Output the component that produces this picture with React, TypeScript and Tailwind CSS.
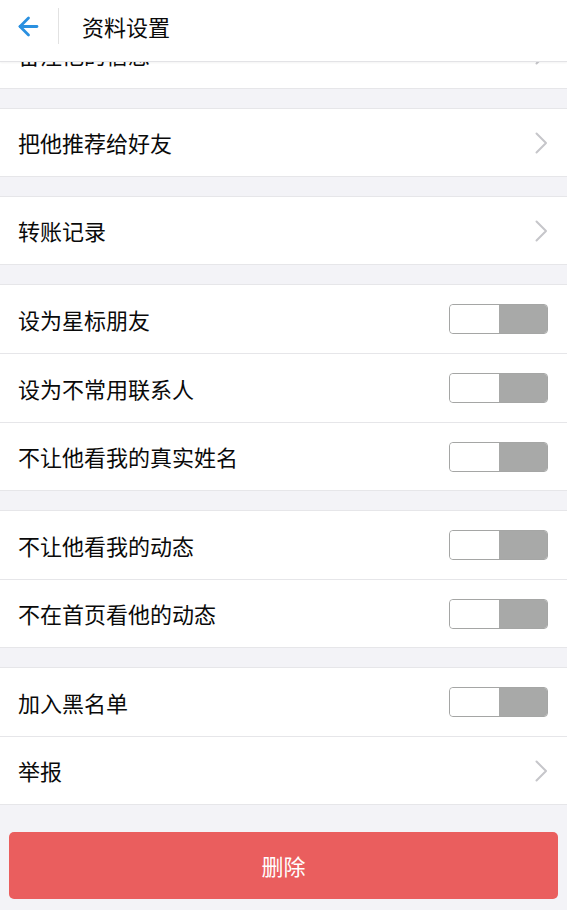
import { ArrowLeft } from 'lucide-react';

type Item = { label: string; kind: 'link' | 'toggle' };

const groups: Item[][] = [
  [{ label: '把他推荐给好友', kind: 'link' }],
  [{ label: '转账记录', kind: 'link' }],
  [
    { label: '设为星标朋友', kind: 'toggle' },
    { label: '设为不常用联系人', kind: 'toggle' },
    { label: '不让他看我的真实姓名', kind: 'toggle' },
  ],
  [
    { label: '不让他看我的动态', kind: 'toggle' },
    { label: '不在首页看他的动态', kind: 'toggle' },
  ],
  [
    { label: '加入黑名单', kind: 'toggle' },
    { label: '举报', kind: 'link' },
  ],
];

function Chevron() {
  return (
    <svg width="13" height="22" viewBox="0 0 13 22" fill="none">
      <polyline points="1.5,1.5 11,11 1.5,20.5" stroke="#c6c6ca" strokeWidth="2" strokeLinecap="round" strokeLinejoin="round" />
    </svg>
  );
}

function Toggle() {
  return (
    <div className="flex h-[30px] w-[99px] overflow-hidden rounded-[4px] border border-[#a5a6a5]">
      <div className="w-1/2 rounded-[3px] bg-white" />
      <div className="w-1/2 bg-[#a8a9a8]" />
    </div>
  );
}

function Row({ item, last }: { item: Item; last: boolean }) {
  return (
    <div
      className={`flex h-[69px] items-center justify-between border-t border-[#e6e6e9] bg-white pl-[18px] pr-[19px] ${
        last ? 'border-b' : ''
      }`}
    >
      <span className="text-[22px] text-[#0a0a0a]">{item.label}</span>
      {item.kind === 'toggle' ? <Toggle /> : <Chevron />}
    </div>
  );
}

export default function App() {
  return (
    <div
      className="relative h-[910px] w-[567px] overflow-hidden bg-[#f3f3f7]"
      style={{ fontFamily: '"Noto Sans CJK SC", "Noto Sans", sans-serif' }}
    >
      <div className="absolute inset-x-0 top-0 z-10 flex h-[62px] items-center border-b border-[#e3e3e6] bg-white pb-[9px] shadow-[0_1px_2px_rgba(0,0,0,0.05)]">
        <div className="flex w-[58px] justify-center pr-[2px]">
          <ArrowLeft size={29} strokeWidth={2.3} className="text-[#2a90e0]" />
        </div>
        <div className="h-[36px] w-px bg-[#e2e2e2]" />
        <span className="pl-[23px] text-[22px] text-[#0a0a0a]">资料设置</span>
      </div>

      <div className="pt-[20px]">
        <div className="flex h-[69px] items-center justify-between border-b border-[#e6e6e9] bg-white pl-[18px] pr-[19px]">
          <span className="text-[22px] text-[#0a0a0a]">备注他的信息</span>
          <Chevron />
        </div>
        {groups.map((g, gi) => (
          <div key={gi} className="mt-[19px] bg-white">
            {g.map((item, i) => (
              <Row key={item.label} item={item} last={i === g.length - 1} />
            ))}
          </div>
        ))}
        <div className="px-[9px] pt-[27px]">
          <button className="flex h-[67px] w-full items-center justify-center rounded-[5px] bg-[#ea5e5e] text-[22px] text-white">
            删除
          </button>
        </div>
      </div>
    </div>
  );
}
